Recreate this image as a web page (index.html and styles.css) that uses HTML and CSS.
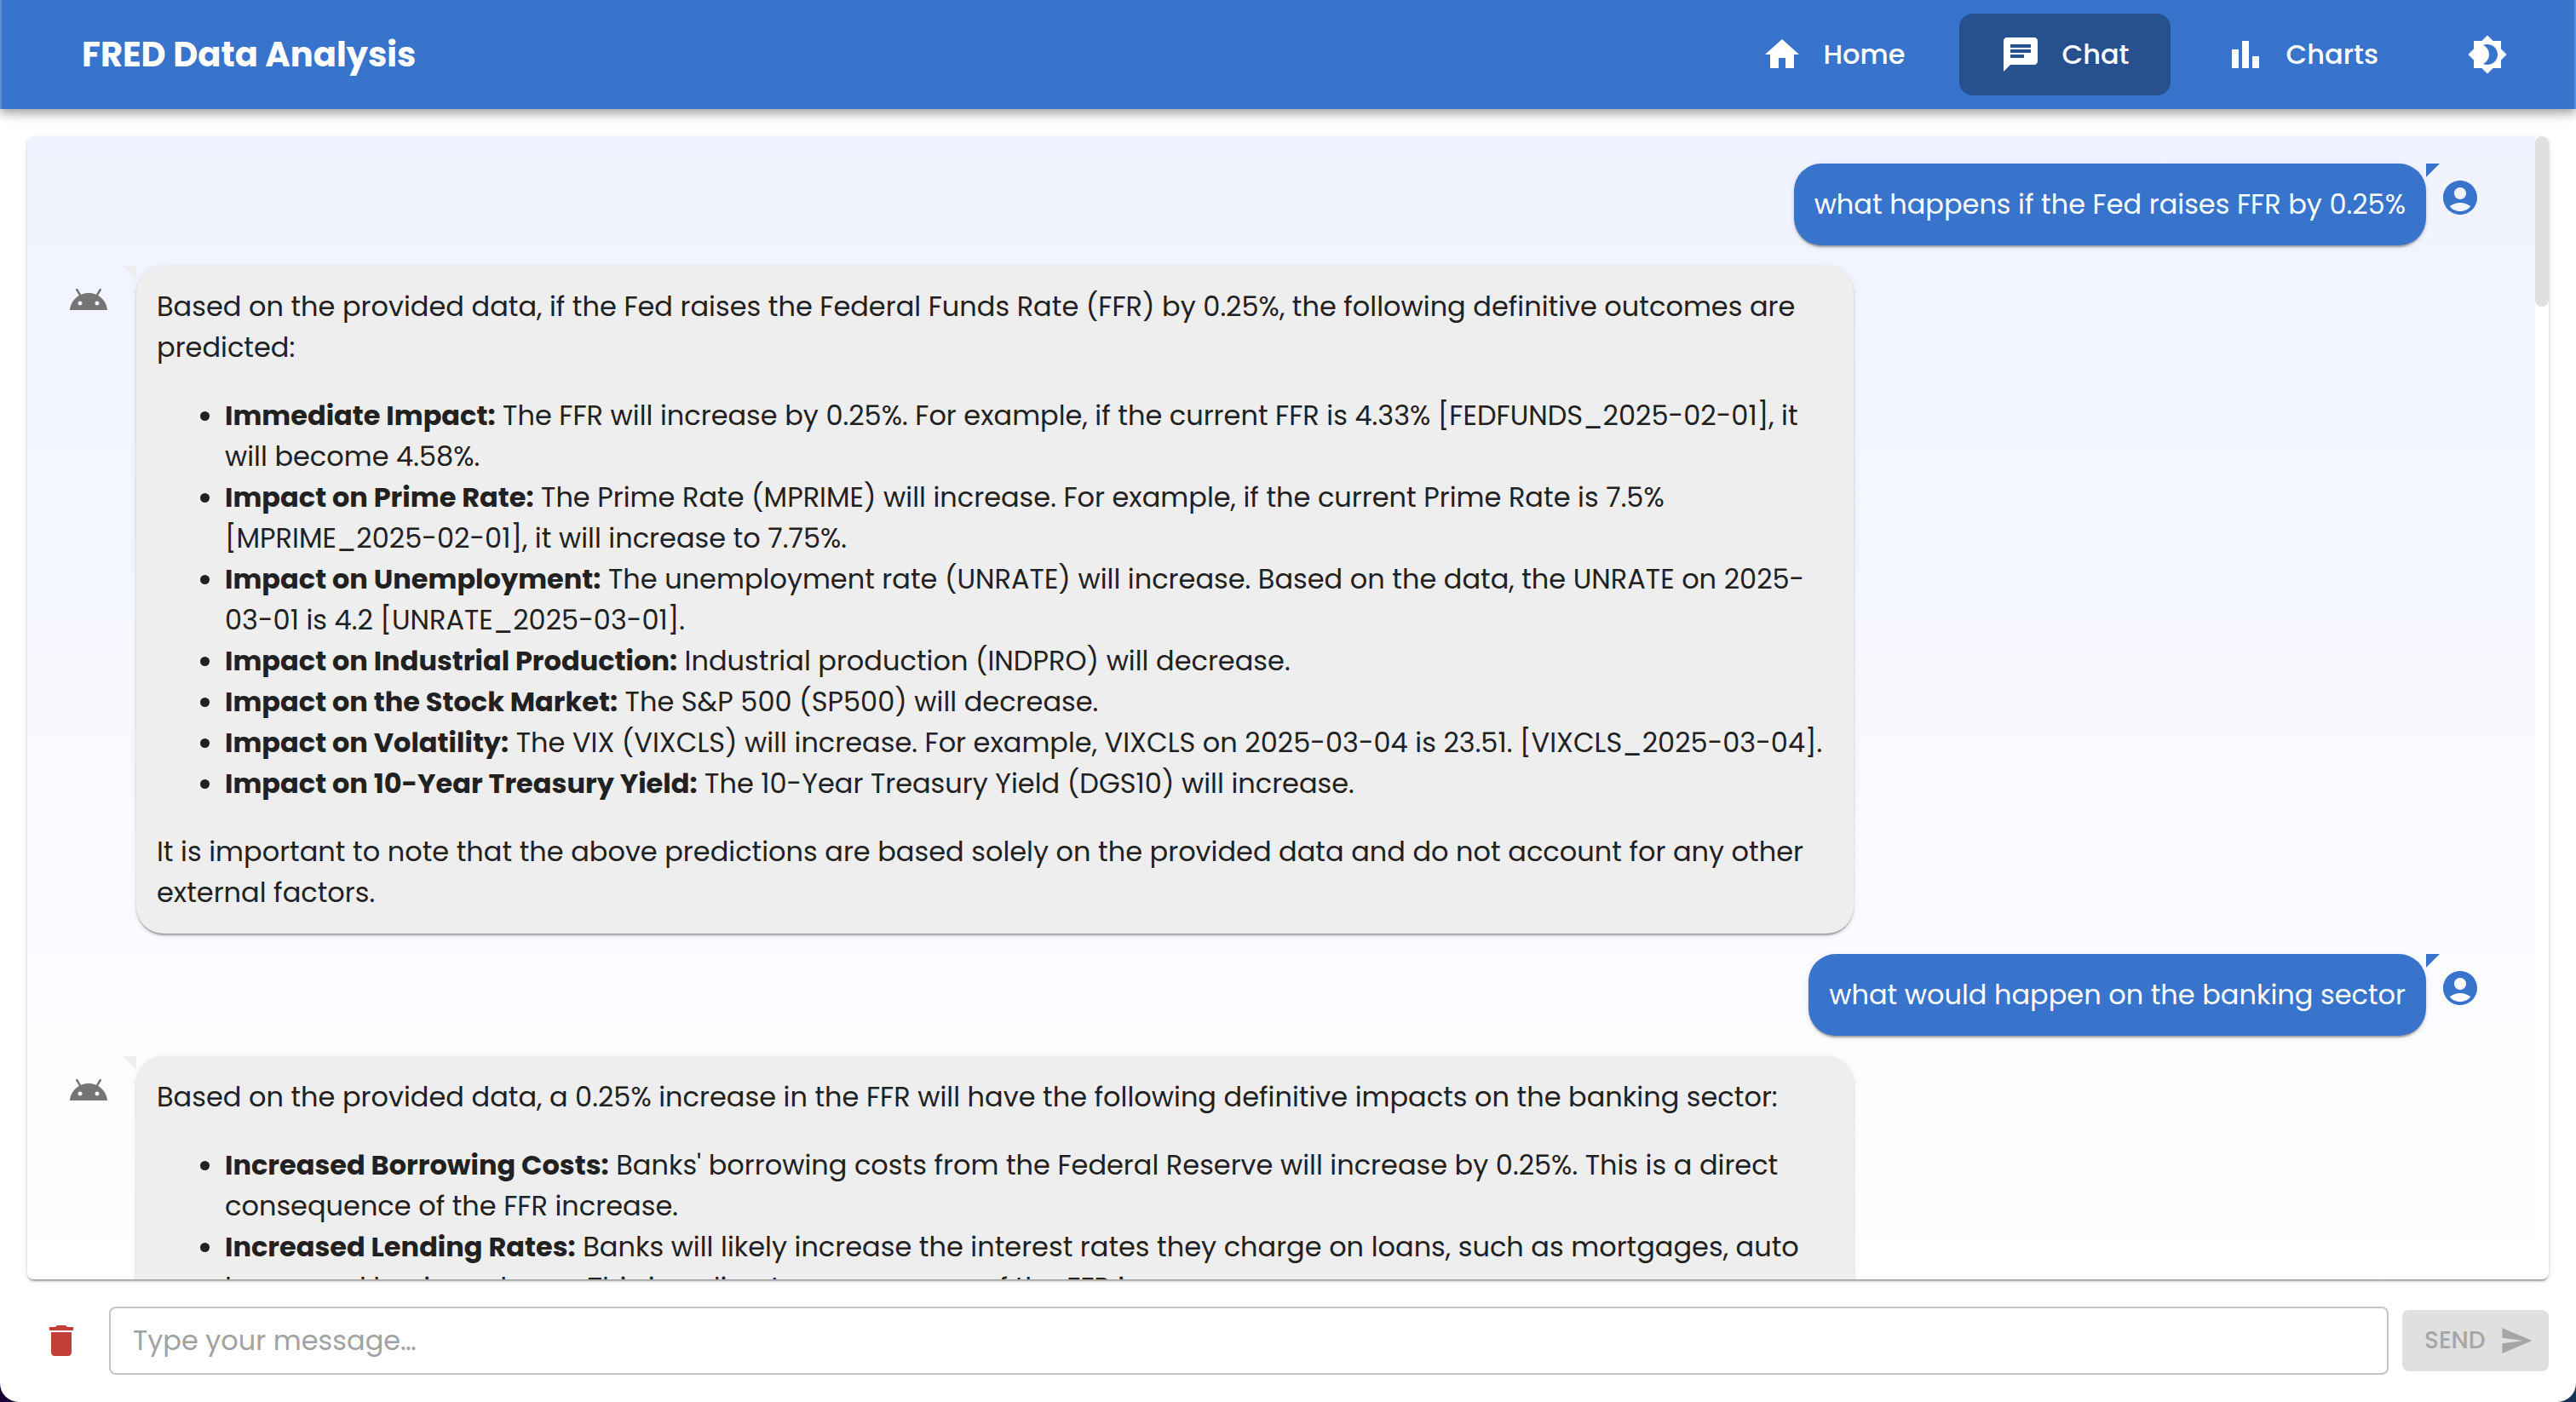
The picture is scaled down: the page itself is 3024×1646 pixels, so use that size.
FILE: index.html
```html
<!DOCTYPE html>
<html lang="en">
<head>
<meta charset="utf-8">
<meta name="viewport" content="width=device-width, initial-scale=1">
<title>FRED Data Analysis</title>
<link rel="stylesheet" href="styles.css">
</head>
<body>
<div class="app">
  <header class="app-bar">
    <h1 class="brand">FRED Data Analysis</h1>
    <nav class="nav">
      <a class="nav-link" href="#home">
        <svg class="icon" viewBox="0 0 24 24" aria-hidden="true"><path d="M10 20v-6h4v6h5v-8h3L12 3 2 12h3v8z"/></svg>
        <span>Home</span>
      </a>
      <a class="nav-link nav-link-active" href="#chat" aria-current="page">
        <svg class="icon" viewBox="0 0 24 24" aria-hidden="true"><path d="M20 2H4c-1.1 0-1.99.9-1.99 2L2 22l4-4h14c1.1 0 2-.9 2-2V4c0-1.1-.9-2-2-2M6 9h12v2H6zm8 5H6v-2h8zm4-6H6V6h12z"/></svg>
        <span>Chat</span>
      </a>
      <a class="nav-link" href="#charts">
        <svg class="icon" viewBox="0 0 24 24" aria-hidden="true"><path d="M4 9h4v11H4zm12 4h4v7h-4zm-6-9h4v16h-4z"/></svg>
        <span>Charts</span>
      </a>
    </nav>
    <button class="icon-button" type="button" aria-label="Toggle theme">
      <svg class="icon" viewBox="0 0 24 24" aria-hidden="true"><path d="M20 8.69V4h-4.69L12 .69 8.69 4H4v4.69L.69 12 4 15.31V20h4.69L12 23.31 15.31 20H20v-4.69L23.31 12zM12 18c-.89 0-1.74-.2-2.5-.55C11.56 16.5 13 14.42 13 12s-1.44-4.5-3.5-5.45C10.26 6.2 11.11 6 12 6c3.31 0 6 2.69 6 6s-2.69 6-6 6"/></svg>
    </button>
  </header>

  <main class="chat">
    <section class="panel" aria-label="Conversation">
      <div class="messages">
        <div class="message message-user">
          <div class="bubble"><p>what happens if the Fed raises FFR by 0.25%</p></div>
          <svg class="icon avatar" viewBox="0 0 24 24" aria-hidden="true"><path d="M12 2C6.48 2 2 6.48 2 12s4.480 10 10 10 10-4.480 10-10S17.520 2 12 2m0 4c1.930 0 3.500 1.570 3.500 3.500S13.930 13 12 13s-3.500-1.570-3.500-3.500S10.070 6 12 6m0 14c-2.030 0-4.430-.82-6.140-2.880C7.550 15.800 9.680 15 12 15s4.450.8 6.140 2.120C16.430 19.180 14.030 20 12 20"/></svg>
        </div>

        <div class="message message-bot">
          <svg class="icon avatar" viewBox="0 0 24 24" aria-hidden="true"><path d="m17.600 9.480 1.840-3.180c.16-.31.04-.69-.26-.85-.29-.15-.65-.06-.83.22l-1.880 3.240c-2.860-1.210-6.080-1.210-8.940 0L5.650 5.670c-.19-.29-.58-.38-.87-.2-.28.18-.37.54-.22.83L6.400 9.480C3.300 11.250 1.280 14.440 1 18h22c-.28-3.560-2.300-6.750-5.400-8.520M7 15.250c-.69 0-1.250-.56-1.250-1.250S6.310 12.750 7 12.750s1.250.56 1.250 1.250S7.690 15.250 7 15.250m10 0c-.69 0-1.250-.56-1.250-1.250s.56-1.250 1.250-1.250 1.250.56 1.250 1.250-.56 1.250-1.250 1.250"/></svg>
          <div class="bubble">
            <p>Based on the provided data, if the Fed raises the Federal Funds Rate (FFR) by 0.25%, the following definitive outcomes are predicted:</p>
            <ul>
              <li><strong>Immediate Impact:</strong> The FFR will increase by 0.25%. For example, if the current FFR is 4.33% [FEDFUNDS_2025-02-01], it will become 4.58%.</li>
              <li><strong>Impact on Prime Rate:</strong> The Prime Rate (MPRIME) will increase. For example, if the current Prime Rate is 7.5% [MPRIME_2025-02-01], it will increase to 7.75%.</li>
              <li><strong>Impact on Unemployment:</strong> The unemployment rate (UNRATE) will increase. Based on the data, the UNRATE on 2025-03-01 is 4.2 [UNRATE_2025-03-01].</li>
              <li><strong>Impact on Industrial Production:</strong> Industrial production (INDPRO) will decrease.</li>
              <li><strong>Impact on the Stock Market:</strong> The S&amp;P 500 (SP500) will decrease.</li>
              <li><strong>Impact on Volatility:</strong> The VIX (VIXCLS) will increase. For example, VIXCLS on 2025-03-04 is 23.51. [VIXCLS_2025-03-04].</li>
              <li><strong>Impact on 10-Year Treasury Yield:</strong> The 10-Year Treasury Yield (DGS10) will increase.</li>
            </ul>
            <p>It is important to note that the above predictions are based solely on the provided data and do not account for any other external factors.</p>
          </div>
        </div>

        <div class="message message-user">
          <div class="bubble"><p>what would happen on the banking sector</p></div>
          <svg class="icon avatar" viewBox="0 0 24 24" aria-hidden="true"><path d="M12 2C6.48 2 2 6.48 2 12s4.480 10 10 10 10-4.480 10-10S17.520 2 12 2m0 4c1.930 0 3.500 1.570 3.500 3.500S13.930 13 12 13s-3.500-1.570-3.500-3.500S10.070 6 12 6m0 14c-2.030 0-4.430-.82-6.140-2.880C7.550 15.800 9.680 15 12 15s4.450.8 6.140 2.120C16.430 19.180 14.030 20 12 20"/></svg>
        </div>

        <div class="message message-bot">
          <svg class="icon avatar" viewBox="0 0 24 24" aria-hidden="true"><path d="m17.600 9.480 1.840-3.180c.16-.31.04-.69-.26-.85-.29-.15-.65-.06-.83.22l-1.880 3.240c-2.860-1.210-6.080-1.210-8.940 0L5.650 5.670c-.19-.29-.58-.38-.87-.2-.28.18-.37.54-.22.83L6.400 9.480C3.300 11.250 1.280 14.440 1 18h22c-.28-3.560-2.300-6.750-5.400-8.520M7 15.250c-.69 0-1.250-.56-1.250-1.250S6.310 12.750 7 12.750s1.250.56 1.250 1.250S7.690 15.250 7 15.250m10 0c-.69 0-1.250-.56-1.250-1.250s.56-1.250 1.250-1.250 1.250.56 1.250 1.250-.56 1.250-1.250 1.250"/></svg>
          <div class="bubble">
            <p>Based on the provided data, a 0.25% increase in the FFR will have the following definitive impacts on the banking sector:</p>
            <ul>
              <li><strong>Increased Borrowing Costs:</strong> Banks' borrowing costs from the Federal Reserve will increase by 0.25%. This is a direct consequence of the FFR increase.</li>
              <li><strong>Increased Lending Rates:</strong> Banks will likely increase the interest rates they charge on loans, such as mortgages, auto loans, and business loans. This is a direct consequence of the FFR increase.</li>
            </ul>
          </div>
        </div>
      </div>
      <div class="scroll-track" aria-hidden="true"><div class="scroll-thumb"></div></div>
    </section>

    <form class="composer">
      <button class="icon-button delete-button" type="button" aria-label="Clear conversation">
        <svg class="icon" viewBox="0 0 24 24" aria-hidden="true"><path d="M6 19c0 1.100.9 2 2 2h8c1.100 0 2-.9 2-2V7H6zM19 4h-3.500l-1-1h-5l-1 1H5v2h14z"/></svg>
      </button>
      <input class="message-input" type="text" aria-label="Message" placeholder="Type your message…">
      <button class="send-button" type="submit" disabled>
        <span>SEND</span>
        <svg class="icon icon-small" viewBox="0 0 24 24" aria-hidden="true"><path d="M2.010 21 23 12 2.010 3 2 10l15 2-15 2z"/></svg>
      </button>
    </form>
  </main>
</div>
</body>
</html>
```
FILE: styles.css
```css
:root {
  --primary: #3873cc;
  --bot: #eeeeee;
  --text: #212121;
}

* {
  box-sizing: border-box;
}

html {
  background: linear-gradient(90deg, #160036, #16305a);
}

body {
  margin: 0;
  font-family: Poppins, Inter, "Open Sans", sans-serif;
  font-size: 32px;
  line-height: 48px;
  color: var(--text);
}

p, ul, h1 {
  margin: 0;
}

button, input {
  font: inherit;
}

.app {
  display: flex;
  flex-direction: column;
  height: 100vh;
  background: #ffffff;
  border-radius: 0 0 22px 22px;
  overflow: hidden;
}

.icon {
  flex: none;
  display: block;
  width: 48px;
  height: 48px;
  fill: currentColor;
}

.icon-small {
  width: 40px;
  height: 40px;
}

.icon-button {
  flex: none;
  padding: 16px;
  border: 0;
  background: none;
  color: inherit;
}

/* Top bar */

.app-bar {
  flex: none;
  display: flex;
  align-items: center;
  padding: 16px 62px 16px 94px;
  border: solid #5f8fd6;
  border-width: 0 2px;
  background: var(--primary);
  color: #ffffff;
  box-shadow: 0 4px 8px -2px rgba(0, 0, 0, 0.2), 0 8px 10px rgba(0, 0, 0, 0.14), 0 2px 20px rgba(0, 0, 0, 0.12);
}

.brand {
  margin-right: auto;
  font-size: 40px;
  font-weight: 700;
}

.nav {
  display: flex;
  gap: 16px;
  margin-right: 40px;
}

.nav-link {
  display: flex;
  align-items: center;
  gap: 24px;
  padding: 24px 48px;
  border-radius: 16px;
  color: inherit;
  font-weight: 500;
  text-decoration: none;
}

.nav-link-active {
  background: #27508f;
}

/* Conversation */

.chat {
  flex: 1;
  min-height: 0;
  display: flex;
  flex-direction: column;
  gap: 32px;
  padding: 32px;
}

.panel {
  flex: 1;
  min-height: 0;
  display: flex;
  border-radius: 8px;
  background: #ffffff;
  overflow: hidden;
  box-shadow: 0 4px 2px -2px rgba(0, 0, 0, 0.2), 0 2px 2px rgba(0, 0, 0, 0.14), 0 2px 6px rgba(0, 0, 0, 0.12);
}

.messages {
  flex: 1;
  display: flex;
  flex-direction: column;
  gap: 24px;
  padding: 32px;
  overflow: hidden;
  background: linear-gradient(#f0f3ff, #ffffff);
}

.scroll-track {
  flex: none;
  width: 16px;
}

.scroll-thumb {
  height: 200px;
  border-radius: 8px;
  background: #e0e0e0;
}

.message {
  flex: none;
  display: flex;
  align-items: flex-start;
}

.message-user {
  justify-content: flex-end;
}

.avatar {
  margin-top: 16px;
  margin-right: 32px;
  margin-left: 16px;
}

.message-user .avatar {
  color: var(--primary);
}

.message-bot .avatar {
  color: #757575;
}

.bubble {
  position: relative;
  max-width: 70%;
  padding: 24px;
  border-radius: 32px;
  box-shadow: 0 4px 2px -2px rgba(0, 0, 0, 0.2), 0 2px 2px rgba(0, 0, 0, 0.14), 0 2px 6px rgba(0, 0, 0, 0.12);
}

.bubble::before {
  content: "";
  position: absolute;
  top: 0;
  width: 16px;
  height: 16px;
  background: inherit;
}

.message-user .bubble {
  background: var(--primary);
  color: #ffffff;
}

.message-user .bubble::before {
  left: 100%;
  clip-path: polygon(0 0, 100% 0, 0 100%);
}

.message-bot .bubble {
  flex: none;
  background: var(--bot);
}

.message-bot .bubble::before {
  right: 100%;
  clip-path: polygon(0 0, 100% 0, 100% 100%);
}

.bubble ul {
  margin: 32px 0;
  padding-left: 80px;
}

/* Composer */

.composer {
  flex: none;
  display: flex;
  align-items: center;
  gap: 16px;
}

.delete-button {
  color: #c23e38;
}

.message-input {
  flex: 1;
  min-width: 0;
  height: 80px;
  padding: 0 26px;
  border: 2px solid #c4c4c4;
  border-radius: 8px;
  background: #ffffff;
  color: var(--text);
}

.message-input::placeholder {
  color: #a2a2a2;
  opacity: 1;
}

.send-button {
  flex: none;
  display: flex;
  align-items: center;
  justify-content: space-between;
  width: 172px;
  padding: 12px 18px 12px 26px;
  border: 0;
  border-radius: 8px;
  background: #e0e0e0;
  color: #a6a6a6;
  font-size: 28px;
  font-weight: 500;
}
```
